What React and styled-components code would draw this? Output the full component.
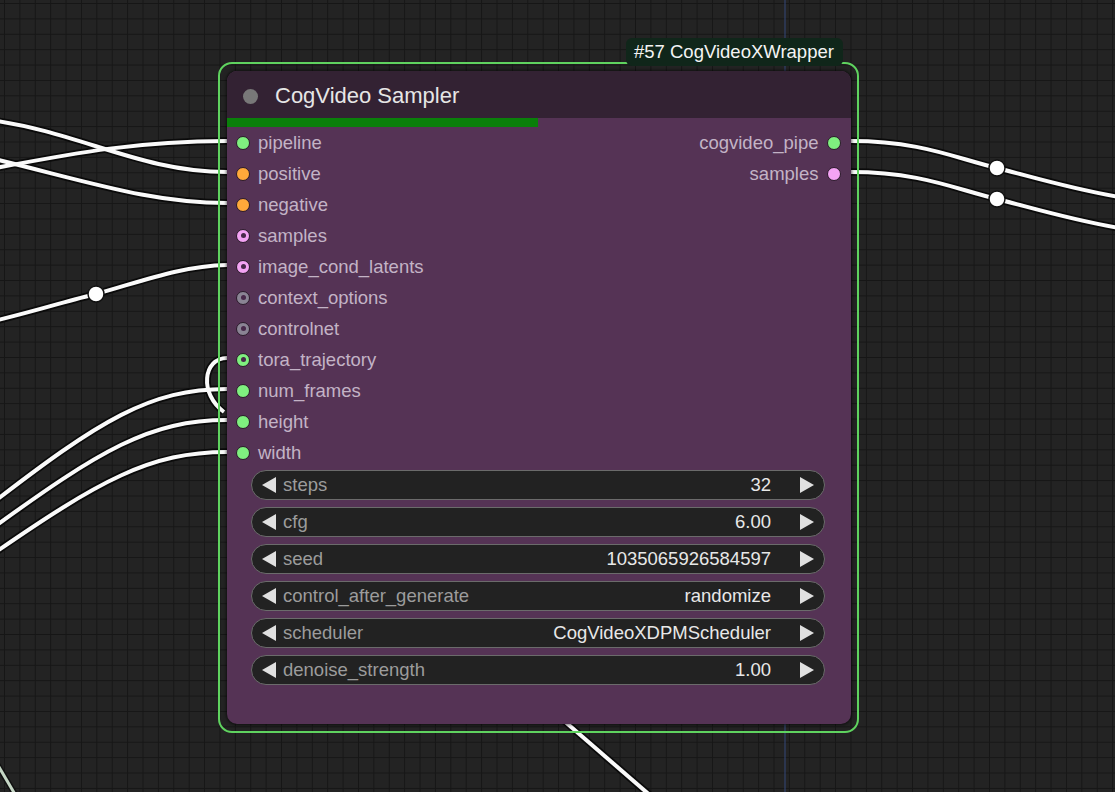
import React from 'react';
import styled, { createGlobalStyle } from 'styled-components';

const GlobalStyle = createGlobalStyle`
  html, body {
    margin: 0;
    padding: 0;
    background: #222;
  }
  body {
    font-family: "Liberation Sans", Arial, sans-serif;
  }
`;

const Canvas = styled.div`
  position: relative;
  width: 1115px;
  height: 792px;
  overflow: hidden;
  background-color: #232323;
  background-image: linear-gradient(#161616 1px, transparent 1px),
    linear-gradient(90deg, #161616 1px, transparent 1px);
  background-size: 15.4px 15.4px;
  background-position: 4px 3px;
`;

const WireLayer = styled.svg`
  position: absolute;
  left: 0;
  top: 0;
`;

const Selection = styled.div`
  position: absolute;
  left: 218px;
  top: 62px;
  width: 641px;
  height: 671px;
  box-sizing: border-box;
  border: 2px solid #5fd35f;
  border-radius: 14px;
  padding: 7px 6px 7px 7px;
  display: flex;
`;

const Badge = styled.div`
  position: absolute;
  left: 406px;
  top: -26px;
  height: 28px;
  padding: 0 9px 0 8px;
  display: flex;
  align-items: center;
  background: #10261a;
  border-radius: 6px;
  color: #f4f4f4;
  font-size: 18.5px;
  white-space: nowrap;
`;

const Node = styled.div`
  flex: 1;
  display: flex;
  flex-direction: column;
  background: #553355;
  border-radius: 10px;
  overflow: hidden;
  box-shadow: 0 0 3px 1px rgba(0, 0, 0, 0.55);
`;

const TitleBar = styled.div`
  height: 47px;
  flex-shrink: 0;
  box-sizing: border-box;
  display: flex;
  align-items: center;
  gap: 17px;
  padding: 3px 0 0 16px;
  background: #332233;
  color: #e6e6e6;
  font-size: 22px;
`;

const TitleDot = styled.span`
  width: 15px;
  height: 15px;
  border-radius: 50%;
  background: #787878;
`;

const Progress = styled.div`
  height: 9px;
  width: 311px;
  flex-shrink: 0;
  background: #0a7f0a;
`;

const Slots = styled.div`
  display: flex;
  justify-content: space-between;
`;

const SlotColumn = styled.div`
  display: flex;
  flex-direction: column;
`;

const Slot = styled.div`
  height: 31px;
  display: flex;
  align-items: center;
  flex-direction: ${(p) => (p.$output ? 'row-reverse' : 'row')};
  gap: ${(p) => (p.$output ? '8.5px' : '8px')};
  padding-left: ${(p) => (p.$output ? '0' : '9px')};
  padding-right: ${(p) => (p.$output ? '10px' : '0')};
  color: #c3b3c6;
  font-size: 18.5px;
`;

const Dot = styled.span`
  position: relative;
  width: 14px;
  height: 14px;
  box-sizing: border-box;
  border-radius: 50%;
  background: ${(p) => p.$color};
  border: 1px solid #2a1a2a;

  &::after {
    content: '';
    display: ${(p) => (p.$hollow ? 'block' : 'none')};
    position: absolute;
    left: 3.5px;
    top: 3.5px;
    width: 5px;
    height: 5px;
    border-radius: 50%;
    background: #48294a;
  }
`;

const Widgets = styled.div`
  display: flex;
  flex-direction: column;
  gap: 7px;
  margin: 2px 26px 0 24px;
`;

const Widget = styled.div`
  height: 30px;
  box-sizing: border-box;
  display: flex;
  align-items: center;
  padding: 0 10px;
  background: #222;
  border: 1px solid #6b6b6b;
  border-radius: 15px;
  font-size: 18.5px;
`;

const Arrow = styled.span`
  width: 0;
  height: 0;
  border-top: 8px solid transparent;
  border-bottom: 8px solid transparent;
  border-right: ${(p) => (p.$right ? 'none' : '14px solid #e0e0e0')};
  border-left: ${(p) => (p.$right ? '14px solid #e0e0e0' : 'none')};
`;

const WidgetLabel = styled.span`
  margin-left: 7px;
  flex: 1;
  color: #9c9c9c;
`;

const WidgetValue = styled.span`
  margin-right: 29px;
  color: #e8e8e8;
`;

const inputs = [
  { name: 'pipeline', color: '#7ff07f' },
  { name: 'positive', color: '#ffa93a' },
  { name: 'negative', color: '#ffa93a' },
  { name: 'samples', color: '#f4a3f4', hollow: true },
  { name: 'image_cond_latents', color: '#f4a3f4', hollow: true },
  { name: 'context_options', color: '#8a8494', hollow: true },
  { name: 'controlnet', color: '#8a8494', hollow: true },
  { name: 'tora_trajectory', color: '#7ff07f', hollow: true },
  { name: 'num_frames', color: '#7ff07f' },
  { name: 'height', color: '#7ff07f' },
  { name: 'width', color: '#7ff07f' },
];

const outputs = [
  { name: 'cogvideo_pipe', color: '#7ff07f' },
  { name: 'samples', color: '#f4a3f4' },
];

const widgets = [
  { name: 'steps', value: '32' },
  { name: 'cfg', value: '6.00' },
  { name: 'seed', value: '1035065926584597' },
  { name: 'control_after_generate', value: 'randomize' },
  { name: 'scheduler', value: 'CogVideoXDPMScheduler' },
  { name: 'denoise_strength', value: '1.00' },
];

const wires = [
  'M-10,120 C80,132 140,172 227,172',
  'M-10,169 C80,152 140,141 227,141',
  'M-10,158 C90,182 150,203 227,203',
  'M-10,322 C40,310 70,300 96,294 C140,282 180,266 227,265',
  'M-10,505 C100,420 150,389 227,389',
  'M-10,530 C100,450 150,420 227,420',
  'M-10,556 C100,480 150,452 227,452',
  'M227,358 C203,358 199,394 224,412',
  'M851,141 C920,141 955,158 997,168 C1040,179 1075,190 1125,198',
  'M851,172 C920,172 955,189 997,199 C1040,210 1075,221 1125,229',
  'M540,700 L652,797',
];

const Wires = () => (
  <WireLayer width="1115" height="792">
    <line x1="785" y1="0" x2="785" y2="792" stroke="#34497a" strokeWidth="1" />
    <path d="M-4,762 L16,796" stroke="#101010" strokeWidth="6" fill="none" />
    <path d="M-4,762 L16,796" stroke="#c5d6c5" strokeWidth="3" fill="none" />
    {wires.map((d) => (
      <path key={d + 'o'} d={d} stroke="#0a0a0a" strokeWidth="7.5" fill="none" />
    ))}
    {wires.map((d) => (
      <path key={d} d={d} stroke="#fafafa" strokeWidth="4" fill="none" />
    ))}
    {[
      [96, 294],
      [997, 168],
      [997, 199],
    ].map(([x, y]) => (
      <circle key={x + '-' + y} cx={x} cy={y} r="8" fill="#fff" stroke="#111" strokeWidth="1.5" />
    ))}
  </WireLayer>
);

export default function App() {
  return (
    <>
      <GlobalStyle />
      <Canvas>
        <Wires />
        <Selection>
          <Badge>#57 CogVideoXWrapper</Badge>
          <Node>
            <TitleBar>
              <TitleDot />
              CogVideo Sampler
            </TitleBar>
            <Progress />
            <Slots>
              <SlotColumn>
                {inputs.map((s) => (
                  <Slot key={s.name}>
                    <Dot $color={s.color} $hollow={s.hollow} />
                    {s.name}
                  </Slot>
                ))}
              </SlotColumn>
              <SlotColumn>
                {outputs.map((s) => (
                  <Slot key={s.name} $output>
                    <Dot $color={s.color} />
                    {s.name}
                  </Slot>
                ))}
              </SlotColumn>
            </Slots>
            <Widgets>
              {widgets.map((w) => (
                <Widget key={w.name}>
                  <Arrow />
                  <WidgetLabel>{w.name}</WidgetLabel>
                  <WidgetValue>{w.value}</WidgetValue>
                  <Arrow $right />
                </Widget>
              ))}
            </Widgets>
          </Node>
        </Selection>
      </Canvas>
    </>
  );
}
